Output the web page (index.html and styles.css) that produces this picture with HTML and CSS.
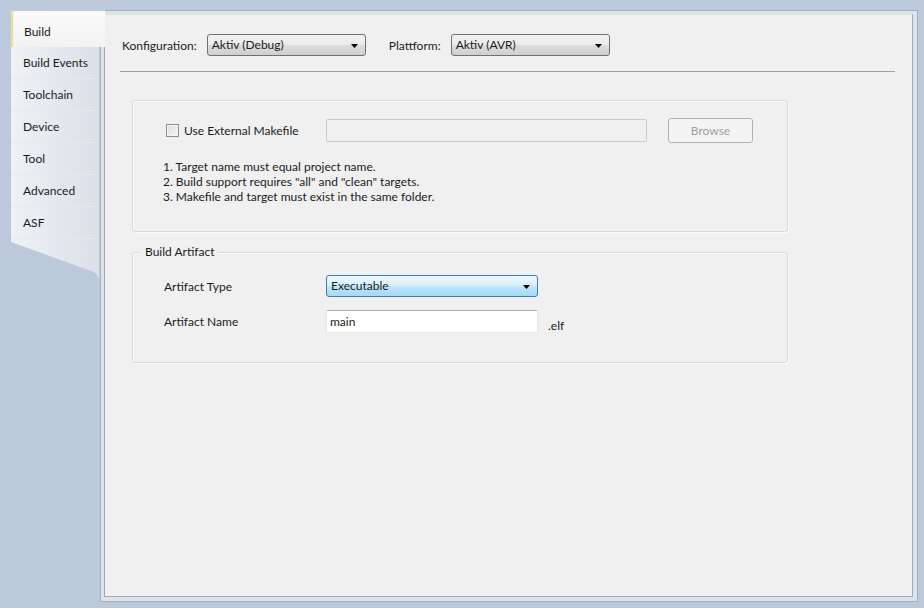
FILE: index.html
```html
<!DOCTYPE html>
<html lang="en">
<head>
    <meta charset="UTF-8">
    <meta name="viewport" content="width=device-width, initial-scale=1.0">
    <title>Project Properties - Build</title>
    <link rel="stylesheet" href="styles.css">
</head>
<body>
    <div class="window">
        <div class="sidebar">
            <div class="tab active">Build</div>
            <div class="tab-list">
                <div class="tab">Build Events</div>
                <div class="tab">Toolchain</div>
                <div class="tab">Device</div>
                <div class="tab">Tool</div>
                <div class="tab">Advanced</div>
                <div class="tab">ASF</div>
            </div>
        </div>

        <div class="frame">
            <div class="panel">
                <div class="toolbar">
                    <span class="label">Konfiguration:</span>
                    <div class="combo">
                        <span>Aktiv (Debug)</span>
                        <svg class="arrow" width="7" height="4" viewBox="0 0 7 4"><path d="M0 0h7L3.5 4z" fill="#000"/></svg>
                    </div>
                    <span class="label platform">Plattform:</span>
                    <div class="combo">
                        <span>Aktiv (AVR)</span>
                        <svg class="arrow" width="7" height="4" viewBox="0 0 7 4"><path d="M0 0h7L3.5 4z" fill="#000"/></svg>
                    </div>
                </div>
                <div class="separator"></div>

                <div class="group makefile">
                    <div class="makefile-row">
                        <label class="check">
                            <span class="box"></span>
                            <span>Use External Makefile</span>
                        </label>
                        <div class="textbox disabled"></div>
                        <button class="button" disabled>Browse</button>
                    </div>
                    <ol class="notes">
                        <li>1. Target name must equal project name.</li>
                        <li>2. Build support requires "all" and "clean" targets.</li>
                        <li>3. Makefile and target must exist in the same folder.</li>
                    </ol>
                </div>

                <div class="group artifact">
                    <span class="legend">Build Artifact</span>
                    <div class="field">
                        <span class="field-label">Artifact Type</span>
                        <div class="combo hot">
                            <span>Executable</span>
                            <svg class="arrow" width="7" height="4" viewBox="0 0 7 4"><path d="M0 0h7L3.5 4z" fill="#000"/></svg>
                        </div>
                    </div>
                    <div class="field">
                        <span class="field-label">Artifact Name</span>
                        <div class="textbox name">main</div>
                        <span class="suffix">.elf</span>
                    </div>
                </div>
            </div>
        </div>
    </div>
</body>
</html>
```

FILE: styles.css
```css
html, body {
    margin: 0;
    height: 100%;
}

body {
    background-color: #bcc9da;
    font-family: Lato, "Liberation Sans", Arial, sans-serif;
    font-size: 12px;
    color: #1b1b1b;
    overflow: hidden;
}

.window {
    display: flex;
    height: 608px;
    box-sizing: border-box;
    padding: 10px 6px 6px 10px;
}

/* left tab strip */
.sidebar {
    width: 90px;
    flex-shrink: 0;
    display: flex;
    flex-direction: column;
    position: relative;
    z-index: 1;
}

.tab {
    height: 32px;
    line-height: 32px;
    padding-left: 13px;
    box-sizing: border-box;
    white-space: nowrap;
}

.tab.active {
    height: 37px;
    line-height: 32px;
    padding-top: 5px;
    width: 95px;
    background: linear-gradient(to bottom, #fbfbfb, #f2f2f2);
    border-top: 1px solid #c4ccd6;
    border-left: 1px solid #c9ced4;
    border-top-left-radius: 3px;
    box-shadow: inset 2px 0 0 #f6d894;
}

.tab-list {
    height: 232px;
    margin-left: 1px;
    background: linear-gradient(to right, #eff1f4, #dbe0e8);
    border-right: 1px solid #c3cad3;
    clip-path: polygon(0 0, 100% 0, 100% 100%, 97% 98.5%, 93% 97%, 0 84%);
}

.tab-list .tab {
    border-bottom: 1px solid #e6e9ed;
    margin-right: 4px;
    padding-left: 12px;
}

/* main frame */
.frame {
    flex: 1;
    border: 1px solid #a6b0bd;
    background-color: #dde3eb;
    padding: 3px 4px 4px 3px;
    display: flex;
}

.panel {
    flex: 1;
    background-color: #f0f0f0;
    border: 1px solid #a3a9b1;
    border-top-color: #dfe3e8;
}

.toolbar {
    display: flex;
    align-items: center;
    padding: 19px 0 0 17px;
}

.label {
    margin-right: 10px;
}

.label.platform {
    margin-left: 23px;
}

.combo {
    position: relative;
    width: 159px;
    height: 22px;
    box-sizing: border-box;
    border: 1px solid #707070;
    border-radius: 3px;
    background: linear-gradient(to bottom, #f2f2f2 0%, #ebebeb 50%, #dddddd 50%, #cfcfcf 100%);
    padding-left: 4px;
    line-height: 20px;
    white-space: nowrap;
}

.combo .arrow {
    position: absolute;
    right: 7px;
    top: 9px;
}

.combo.hot {
    width: 212px;
    border-color: #3c7fb1;
    background: linear-gradient(to bottom, #eaf6fd 0%, #d9f0fc 50%, #bee6fd 50%, #a7d9f5 100%);
}

.separator {
    height: 1px;
    background-color: #a0a0a0;
    margin: 15px 17px 0 15px;
}

/* group boxes */
.group {
    position: relative;
    width: 656px;
    box-sizing: border-box;
    margin-left: 27px;
    border: 1px solid #d5d9de;
    border-radius: 3px;
    box-shadow: inset 1px 1px 0 #fbfbfb, 1px 1px 0 #fbfbfb;
}

.makefile {
    margin-top: 28px;
    height: 132px;
    padding: 17px 0 0 30px;
}

.makefile-row {
    display: flex;
    align-items: center;
    height: 25px;
}

.check {
    display: flex;
    align-items: center;
    width: 163px;
}

.check .box {
    width: 13px;
    height: 13px;
    box-sizing: border-box;
    margin: 0 5px 0 3px;
    border: 1px solid #8e8f8f;
    background: linear-gradient(135deg, #dcdcdc, #f6f6f6);
    box-shadow: inset 0 0 0 1px #f4f4f4;
}

.textbox {
    height: 23px;
    box-sizing: border-box;
    border: 1px solid #e3e9ef;
    border-top-color: #abadb3;
    border-radius: 2px;
    background-color: #ffffff;
    line-height: 21px;
    padding-left: 3px;
}

.textbox.disabled {
    width: 321px;
    background-color: #f0f0f0;
    border-color: #c8cbce;
}

.button {
    margin-left: 21px;
    width: 85px;
    height: 25px;
    border: 1px solid #adb2b5;
    border-radius: 3px;
    background-color: #f4f4f4;
    color: #a0a0a0;
    font-family: inherit;
    font-size: 12px;
}

.notes {
    list-style: none;
    margin: 16px 0 0 0;
    padding: 0;
    line-height: 15px;
}

.artifact {
    margin-top: 20px;
    height: 111px;
    padding: 22px 0 0 31px;
}

.legend {
    position: absolute;
    top: -9px;
    left: 8px;
    padding: 0 4px;
    background-color: #f0f0f0;
    line-height: 16px;
}

.field {
    display: flex;
    align-items: center;
    margin-bottom: 12px;
}

.field-label {
    width: 162px;
}

.textbox.name {
    width: 212px;
}

.suffix {
    margin-left: 10px;
    margin-top: 9px;
}
```
